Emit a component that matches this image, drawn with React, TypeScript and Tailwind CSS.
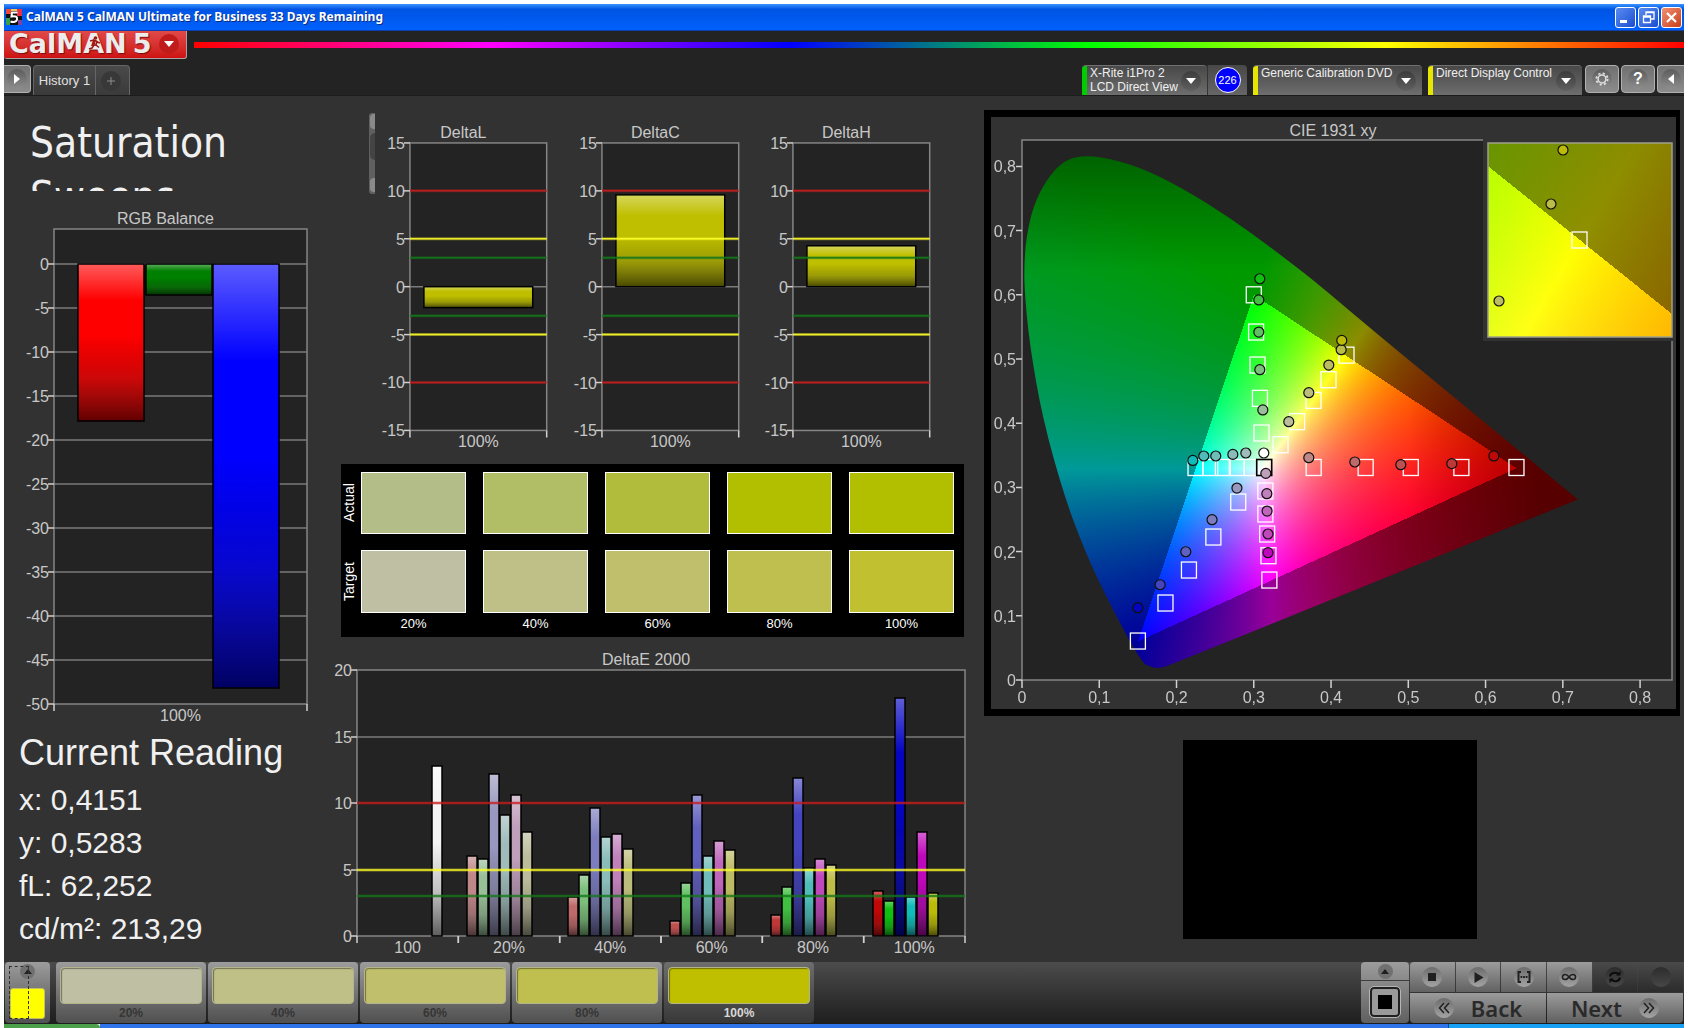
import React, { useLayoutEffect, useRef } from "react";

const CHART_FONT = "font-['Liberation_Sans',Arial,sans-serif]";

type Bar = { x: number; width: number; value: number; color: string };
type Line = { value: number; color: string };

type ChartProps = {
  title: string;
  width: number;
  height: number;
  plot: { left: number; top: number; right: number; bottom: number };
  min: number;
  max: number;
  ticks: number[];
  grid: number[];
  lines?: Line[];
  bars: Bar[];
  xLabels: string[];
};

const Gloss: React.FC = () => (
  <svg width="0" height="0" className="absolute" aria-hidden="true">
    <defs>
      <linearGradient id="gloss" x1="0" y1="0" x2="0" y2="1">
        <stop offset="0" stopColor="#fff" stopOpacity="0.36" />
        <stop offset="0.23" stopColor="#fff" stopOpacity="0" />
        <stop offset="0.45" stopColor="#000" stopOpacity="0" />
        <stop offset="0.72" stopColor="#222" stopOpacity="0.22" />
        <stop offset="1" stopColor="#000" stopOpacity="0.62" />
      </linearGradient>
    </defs>
  </svg>
);

const BarChart: React.FC<ChartProps> = ({
  title,
  width,
  height,
  plot,
  min,
  max,
  ticks,
  grid,
  lines = [],
  bars,
  xLabels,
}) => {
  const { left, top, right, bottom } = plot;
  const y = (v: number) =>
    Math.round(bottom - ((v - min) / (max - min)) * (bottom - top));
  const cell = (right - left) / xLabels.length;
  const zero = y(0);

  return (
    <svg
      viewBox={`0 0 ${width} ${height}`}
      className={`block w-full h-auto text-base ${CHART_FONT}`}
      role="img"
      aria-label={title}
    >
      <text
        x={(left + right) / 2 - 15}
        y={top - 5}
        textAnchor="middle"
        fill="#c8c8c8"
      >
        {title}
      </text>
      <rect
        x={left}
        y={top}
        width={right - left}
        height={bottom - top}
        fill="#232323"
      />
      {grid.map((v) => (
        <path
          key={v}
          d={`M${left} ${y(v)}H${right}`}
          stroke="#7b7b7b"
          strokeWidth="1.5"
        />
      ))}
      <rect
        x={left}
        y={top}
        width={right - left}
        height={bottom - top}
        fill="none"
        stroke="#858585"
        strokeWidth="1.5"
      />
      {bars.map((bar, i) => {
        const end = y(bar.value);
        const box = {
          x: bar.x,
          y: Math.min(zero, end),
          width: bar.width,
          height: Math.abs(end - zero),
        };
        return (
          <g key={i}>
            <rect {...box} fill={bar.color} />
            <rect {...box} fill="url(#gloss)" stroke="#000" strokeWidth="1.5" />
          </g>
        );
      })}
      {lines.map((line) => (
        <g key={line.value} stroke={line.color}>
          <path
            d={`M${left} ${y(line.value)}H${right}`}
            strokeWidth="3"
            opacity="0.4"
          />
          <path
            d={`M${left} ${y(line.value)}H${right}`}
            strokeWidth="1.5"
            opacity="0.85"
          />
        </g>
      ))}
      {ticks.map((v) => (
        <g key={v}>
          <path
            d={`M${left - 6} ${y(v)}H${left}`}
            stroke="#d0d0d0"
            strokeWidth="1.5"
          />
          <text x={left - 5} y={y(v) + 6} textAnchor="end" fill="#c8c8c8">
            {v}
          </text>
        </g>
      ))}
      {xLabels.map((label, i) => (
        <g key={i}>
          <path
            d={`M${left + i * cell} ${bottom}v7M${left + (i + 1) * cell} ${bottom}v7`}
            stroke="#d0d0d0"
            strokeWidth="1.5"
          />
          <text
            x={left + (i + 0.5) * cell}
            y={bottom + 17}
            textAnchor="middle"
            fill="#c8c8c8"
          >
            {label}
          </text>
        </g>
      ))}
    </svg>
  );
};

const limits: Line[] = [
  { value: 10, color: "#c81e1e" },
  { value: 5, color: "#ffff28" },
  { value: 3, color: "#14781a" },
  { value: -3, color: "#14781a" },
  { value: -5, color: "#ffff28" },
  { value: -10, color: "#c81e1e" },
];

const DeltaChart: React.FC<{ title: string; value: number }> = ({
  title,
  value,
}) => (
  <BarChart
    title={title}
    width={192}
    height={344}
    plot={{ left: 35, top: 30, right: 172, bottom: 318 }}
    min={-15}
    max={15}
    ticks={[15, 10, 5, 0, -5, -10, -15]}
    grid={[0]}
    lines={limits}
    bars={[{ x: 49, width: 109, value, color: "#bfbf00" }]}
    xLabels={["100%"]}
  />
);

const deltaE = [
  {
    values: [6, 5.8, 12.2, 9.1, 10.6, 7.8],
    colors: ["#bf8888", "#98bf98", "#9898bf", "#a0bcba", "#bf9fba", "#bcbc9c"],
  },
  {
    values: [2.9, 4.6, 9.65, 7.45, 7.65, 6.55],
    colors: ["#bf6a6a", "#7dbf7d", "#7c7cbf", "#8abcba", "#bf80bb", "#bcbc7c"],
  },
  {
    values: [1.15, 4, 10.6, 6.05, 7.15, 6.45],
    colors: ["#bf5050", "#60bf60", "#6060bf", "#70bcba", "#bf66bb", "#bcbc64"],
  },
  {
    values: [1.6, 3.65, 11.85, 5.1, 5.8, 5.35],
    colors: ["#bf3838", "#40bf40", "#4444bf", "#50bcba", "#bf48bb", "#bcbc48"],
  },
  {
    values: [3.4, 2.65, 17.9, 2.9, 7.8, 3.2],
    colors: ["#bf0808", "#10bf10", "#0505bf", "#10bcba", "#bf08bb", "#bcbc08"],
  },
];

const deltaEBars: Bar[] = [
  { x: 102, width: 10, value: 12.8, color: "#f4f4f4" },
  ...deltaE.flatMap(({ values, colors }, group) =>
    values.map((value, i) => ({
      x: Math.round(137 + group * 101.4) + i * 11,
      width: 10,
      value,
      color: colors[i],
    })),
  ),
];

/* CIE 1931 chromaticity diagram */

const PLOT_W = 650;
const PLOT_H = 540;
const UNIT_X = 772.6;
const UNIT_Y = 642;

const locus: [number, number][] = [
  [0.164, 0.0195],
  [0.1555, 0.029],
  [0.1409, 0.0576],
  [0.1087, 0.1302],
  [0.0824, 0.1978],
  [0.0561, 0.2809],
  [0.0269, 0.4054],
  [0.0095, 0.5247],
  [0.003, 0.61],
  [0.003, 0.65],
  [0.0055, 0.689],
  [0.0145, 0.7385],
  [0.032, 0.78],
  [0.0503, 0.8045],
  [0.07, 0.816],
  [0.0999, 0.8155],
  [0.1496, 0.8009],
  [0.208, 0.766],
  [0.2694, 0.7197],
  [0.325, 0.671],
  [0.3775, 0.6229],
  [0.4477, 0.551],
  [0.5955, 0.4045],
  [0.7194, 0.2813],
  [0.189, 0.022],
  [0.178, 0.0185],
];

const locusPath =
  locus
    .map((p, i) => {
      const q = locus[(i + 1) % locus.length];
      const mx = ((p[0] + q[0]) / 2) * UNIT_X;
      const my = PLOT_H - ((p[1] + q[1]) / 2) * UNIT_Y;
      if (i === 0) return `M${mx} ${my}`;
      const px = p[0] * UNIT_X;
      const py = PLOT_H - p[1] * UNIT_Y;
      // keep the red corner sharp, smooth everything else
      return p[0] > 0.7 ? `L${px} ${py}L${mx} ${my}` : `Q${px} ${py} ${mx} ${my}`;
    })
    .join("") + "Z";

const chromaColor = (x: number, y: number): [number, number, number] => {
  const X = x / y;
  const Z = (1 - x - y) / y;
  const r = 3.2406 * X - 1.5372 - 0.4986 * Z;
  const g = -0.9689 * X + 1.8758 + 0.0415 * Z;
  const b = 0.0557 * X - 0.204 + 1.057 * Z;
  const inside = r >= 0 && g >= 0 && b >= 0;
  const level = inside
    ? 1 - 2 * Math.max(0, x - 0.5)
    : Math.max(
        0.34,
        0.6 - 1.2 * Math.max(0, y - 0.64) - 0.9 * Math.max(0, x - 0.38),
      );
  const k = (255 * level) / Math.max(r, g, b);
  return [Math.max(0, r) * k, Math.max(0, g) * k, Math.max(0, b) * k];
};

type GamutProps = {
  width: number;
  height: number;
  x0: number;
  x1: number;
  y0: number;
  y1: number;
  outline?: string;
};

const GamutCanvas: React.FC<GamutProps> = ({
  width,
  height,
  x0,
  x1,
  y0,
  y1,
  outline,
}) => {
  const ref = useRef<HTMLCanvasElement>(null);

  useLayoutEffect(() => {
    const ctx = ref.current?.getContext("2d");
    if (!ctx) return;
    const image = ctx.createImageData(width, height);
    for (let j = 0; j < height; j++) {
      const y = y1 - ((j + 0.5) / height) * (y1 - y0);
      for (let i = 0; i < width; i++) {
        const x = x0 + ((i + 0.5) / width) * (x1 - x0);
        const [r, g, b] = chromaColor(x, Math.max(y, 0.001));
        image.data.set([r, g, b, 255], (j * width + i) * 4);
      }
    }
    ctx.putImageData(image, 0, 0);
    if (outline) {
      ctx.globalCompositeOperation = "destination-in";
      ctx.fill(new Path2D(outline));
    }
  }, [width, height, x0, x1, y0, y1, outline]);

  return (
    <canvas
      ref={ref}
      width={width}
      height={height}
      className="block w-full h-full"
    />
  );
};

const targets: [number, number][] = [
  [0.3775, 0.331], [0.4448, 0.331], [0.5032, 0.331], [0.5687, 0.331], [0.64, 0.331],
  [0.31, 0.3847], [0.308, 0.4387], [0.3048, 0.4906], [0.303, 0.542], [0.3, 0.6],
  [0.2799, 0.2772], [0.2477, 0.2227], [0.2161, 0.1713], [0.1857, 0.1199], [0.15, 0.0607],
  [0.2975, 0.331], [0.278, 0.331], [0.26, 0.331], [0.2436, 0.331], [0.2246, 0.331],
  [0.315, 0.2944], [0.315, 0.2586], [0.3173, 0.2274], [0.319, 0.1936], [0.3202, 0.1557],
  [0.3346, 0.3665], [0.356, 0.4024], [0.3773, 0.4355], [0.3967, 0.4677], [0.42, 0.506],
];

const readings: [number, number, string][] = [
  [0.3712, 0.3463, "#bf8888"], [0.4308, 0.3396, "#bf6a6a"], [0.4903, 0.3354, "#bf5050"],
  [0.5563, 0.337, "#bf3838"], [0.6107, 0.349, "#bf0808"],
  [0.3117, 0.4206, "#98bf98"], [0.3078, 0.4833, "#7dbf7d"], [0.3065, 0.542, "#60bf60"],
  [0.3065, 0.592, "#40bf40"], [0.3078, 0.625, "#10bf10"],
  [0.2782, 0.299, "#9898bf"], [0.246, 0.2497, "#7c7cbf"], [0.212, 0.1998, "#6060bf"],
  [0.1788, 0.1484, "#4444bf"], [0.15, 0.1126, "#0505bf"],
  [0.2897, 0.3536, "#a0bcba"], [0.2729, 0.3514, "#8abcba"], [0.2508, 0.3489, "#70bcba"],
  [0.2353, 0.3489, "#50bcba"], [0.2211, 0.342, "#10bcba"],
  [0.3156, 0.3219, "#bf9fba"], [0.3169, 0.2902, "#bf80bb"], [0.3172, 0.2632, "#bf66bb"],
  [0.3184, 0.2274, "#bf48bb"], [0.3184, 0.1983, "#bf08bb"],
  [0.3453, 0.4023, "#bcbc9c"], [0.3712, 0.4475, "#bcbc7c"], [0.3971, 0.4906, "#bcbc64"],
  [0.4131, 0.5145, "#bcbc48"], [0.4139, 0.529, "#bcbc08"],
  [0.313, 0.3536, "#ffffff"],
];

const decimal = (n: number) => (n === 0 ? "0" : `0,${n}`);

const CieChart: React.FC = () => {
  const left = 31;
  const bottom = 563;
  const px = (x: number) => left + x * UNIT_X;
  const py = (y: number) => bottom - y * UNIT_Y;

  return (
    <svg
      viewBox="0 0 685 592"
      className={`block w-full h-auto text-base ${CHART_FONT}`}
      role="img"
      aria-label="CIE 1931 xy"
    >
      <text x="342" y="19" textAnchor="middle" fill="#c8c8c8">
        CIE 1931 xy
      </text>
      <rect
        x={left}
        y={bottom - PLOT_H}
        width={PLOT_W}
        height={PLOT_H}
        fill="#232323"
        stroke="#858585"
        strokeWidth="1.5"
      />
      <foreignObject
        x={left}
        y={bottom - PLOT_H}
        width={PLOT_W}
        height={PLOT_H}
      >
        <GamutCanvas
          width={PLOT_W}
          height={PLOT_H}
          x0={0}
          x1={PLOT_W / UNIT_X}
          y0={0}
          y1={PLOT_H / UNIT_Y}
          outline={locusPath}
        />
      </foreignObject>
      {[0, 1, 2, 3, 4, 5, 6, 7, 8].map((n) => (
        <g key={n} fill="#c8c8c8">
          <path
            d={`M${left - 6} ${py(n / 10)}H${left}M${px(n / 10)} ${bottom}v8`}
            stroke="#d0d0d0"
            strokeWidth="1.5"
          />
          <text x={left - 6} y={py(n / 10) + 6} textAnchor="end">
            {decimal(n)}
          </text>
          <text x={px(n / 10)} y={bottom + 23} textAnchor="middle">
            {decimal(n)}
          </text>
        </g>
      ))}
      {targets.map(([x, y], i) => (
        <rect
          key={i}
          x={px(x) - 7.5}
          y={py(y) - 8}
          width="15"
          height="16"
          fill="none"
          stroke="#fff"
          strokeWidth="1.3"
        />
      ))}
      <rect
        x={px(0.3135) - 7.5}
        y={py(0.331) - 8}
        width="15"
        height="16"
        fill="none"
        stroke="#000"
        strokeWidth="1.6"
      />
      {readings.map(([x, y, color], i) => (
        <circle
          key={i}
          cx={px(x)}
          cy={py(y)}
          r="5"
          fill={color}
          stroke="#101010"
          strokeWidth="1.2"
        />
      ))}

      <rect x="492" y="20" width="193" height="204" fill="#323232" />
      <foreignObject x="497" y="26" width="184" height="194">
        <GamutCanvas
          width={184}
          height={194}
          x0={0.3953}
          x1={0.4433}
          y0={0.4803}
          y1={0.5303}
        />
      </foreignObject>
      <rect
        x="497"
        y="26"
        width="184"
        height="194"
        fill="none"
        stroke="#a0a08c"
        strokeWidth="1.5"
      />
      <rect
        x="581"
        y="115"
        width="15"
        height="16"
        fill="none"
        stroke="#fff"
        strokeWidth="1.3"
      />
      <g stroke="#101010" strokeWidth="1.2">
        <circle cx="572" cy="33" r="5" fill="#bcbc08" />
        <circle cx="560" cy="87" r="5" fill="#bcbc48" />
        <circle cx="508" cy="184" r="5" fill="#bcbc64" />
      </g>
    </svg>
  );
};

/* Window chrome */

const TitleBar: React.FC = () => (
  <div className="flex h-[27px] items-center gap-1 bg-linear-to-b from-[#3a93ff] via-[#0054e3] via-20% to-[#0061fc] border-b border-[#0b3fae] pl-[2px] pr-[2px]">
    <svg viewBox="0 0 16 16" className="size-4" aria-hidden="true">
      <rect width="16" height="16" fill="#101010" />
      <path d="M0 0h5v5H0z" fill="#f04838" />
      <path d="M11 0h5v7h-5z" fill="#e83040" />
      <path d="M0 9h4v7H0z" fill="#38a048" />
      <path d="M12 11h4v5h-4z" fill="#8040a0" />
      <path d="M5 0h6v2H5z" fill="#e8c860" />
      <path
        d="M11.500 3.500H6L5.500 7.500C10 6.500 11.500 8 11 10.500 10.500 13 7.500 13.500 4.500 12.500"
        fill="none"
        stroke="#fff"
        strokeWidth="2"
      />
    </svg>
    <h1 className="flex-1 truncate font-['Noto_Sans','Open_Sans',sans-serif] text-xs font-bold text-white [text-shadow:1px_1px_0_#0a2a80]">
      CalMAN 5 CalMAN Ultimate for Business 33 Days Remaining
    </h1>
    <div className="flex gap-[2px]">
      <button
        aria-label="Minimize"
        className="size-[21px] rounded-[3px] border border-white bg-linear-to-br from-[#5a8cf0] to-[#1c4cd0]"
      >
        <svg viewBox="0 0 19 19" className="size-full">
          <path d="M4 12h7v3H4z" fill="#fff" />
        </svg>
      </button>
      <button
        aria-label="Restore"
        className="size-[21px] rounded-[3px] border border-white bg-linear-to-br from-[#5a8cf0] to-[#1c4cd0]"
      >
        <svg viewBox="0 0 19 19" className="size-full">
          <path
            d="M7 7V4h8v7h-3M7 4.500h8M4.500 8h7v6.500h-7zM4 9h8"
            fill="none"
            stroke="#fff"
            strokeWidth="1.3"
          />
        </svg>
      </button>
      <button
        aria-label="Close"
        className="size-[21px] rounded-[3px] border border-white bg-linear-to-br from-[#f09070] to-[#c83a14]"
      >
        <svg viewBox="0 0 19 19" className="size-full">
          <path d="M5 5l9 9M14 5l-9 9" stroke="#fff" strokeWidth="2.2" />
        </svg>
      </button>
    </div>
  </div>
);

const DownArrow: React.FC<{ className: string }> = ({ className }) => (
  <span
    className={`flex size-5 shrink-0 items-center justify-center rounded-full ${className}`}
  >
    <svg viewBox="0 0 10 6" className="w-[10px]" aria-hidden="true">
      <path d="M0 0h10L5 6z" fill="#fff" />
    </svg>
  </span>
);

const SourceButton: React.FC<{
  lines: string[];
  width: string;
  stripe: string;
}> = ({ lines, width, stripe }) => (
  <button
    className={`flex h-[30px] ${width} overflow-hidden rounded-t-[4px] border-t border-[#707070] bg-linear-to-b from-[#484848] to-[#6e6e6e] text-left`}
  >
    <span className={`h-full w-[5px] shrink-0 ${stripe}`} />
    <span className="flex-1 pl-[3px] text-xs leading-[14px] whitespace-nowrap text-[#f0f0f0]">
      {lines.map((line) => (
        <span key={line} className="block">
          {line}
        </span>
      ))}
    </span>
    <DownArrow className="mt-[5px] mr-[6px] bg-linear-to-b from-[#3c3c3c] to-[#606060]" />
  </button>
);

const roundIcon =
  "flex size-5 items-center justify-center rounded-full bg-linear-to-b from-[#5c5c5c] to-[#8e8e8e]";
const squareButton =
  "flex h-7 items-center justify-center border border-[#b0b0b0] bg-linear-to-b from-[#707070] to-[#8c8c8c]";

const Header: React.FC = () => (
  <header className="bg-[#232323]">
    <div className="flex h-[34px] items-start">
      <button className="flex h-[28px] w-[183px] items-start overflow-hidden rounded-b-[3px] border-r border-b border-[#a8a0a0] bg-linear-to-b from-[#e04848] to-[#cc1010] pl-[5px]">
        <span className="relative flex gap-[6px] font-['DejaVu_Sans',sans-serif] text-[27px] leading-[26px] font-bold text-[#ececec] [text-shadow:1px_1px_1px_#7c0c0c]">
          <span>CalMAN</span>
          <span>5</span>
          <svg
            viewBox="0 0 14 16"
            className="absolute top-[5px] left-[79px] h-4 w-[14px]"
            aria-hidden="true"
          >
            <circle cx="7.500" cy="2" r="1.800" fill="#9c1818" />
            <path
              d="M2 5l4-1 3 1.500L8 9l3 2.500M6.500 5L6 9l-2 3-3 1M9 6l3 1"
              fill="none"
              stroke="#9c1818"
              strokeWidth="1.600"
            />
          </svg>
        </span>
        <DownArrow className="mt-[3px] ml-2 bg-[#c01c1c]" />
      </button>
      <div className="mt-[11px] ml-[7px] h-[6px] flex-1 bg-[linear-gradient(90deg,#f00_0%,#f0f_20%,#00f_40%,#0f0_60%,#ff0_80%,#f00_100%)]" />
    </div>
    <div className="flex h-[31px] items-start justify-between border-b border-[#1c1c1c]">
      <div className="flex">
        <button
          aria-label="Expand"
          className={`${squareButton} w-[27px] rounded-r-[4px] border-l-0`}
        >
          <span className={roundIcon}>
            <svg viewBox="0 0 6 10" className="h-[10px]">
              <path d="M0 0l6 5-6 5z" fill="#fff" />
            </svg>
          </span>
        </button>
        <div className="ml-[2px] flex h-[30px] rounded-t-[4px] border border-b-0 border-[#666] bg-linear-to-b from-[#4a4a4a] to-[#3a3a3a]">
          <button className="w-[62px] border-r border-[#666] text-[13px] whitespace-nowrap text-[#e0e0e0]">
            History 1
          </button>
          <button
            aria-label="Add history"
            className="flex w-[33px] items-center justify-center pr-1"
          >
            <span className="flex size-5 items-center justify-center rounded-full bg-[#383838]">
              <svg viewBox="0 0 8 8" className="size-2">
                <path d="M4 0v8M0 4h8" stroke="#8c8c8c" />
              </svg>
            </span>
          </button>
        </div>
      </div>
      <div className="flex">
        <SourceButton
          lines={["X-Rite i1Pro 2", "LCD Direct View"]}
          width="w-[125px]"
          stripe="bg-[#0c0]"
        />
        <div className="mr-[6px] flex h-[30px] w-[40px] items-center justify-center rounded-tr-[4px] border-l border-[#333] bg-linear-to-b from-[#484848] to-[#666]">
          <span className="flex size-[26px] items-center justify-center rounded-full border border-white bg-[#00f] text-[11px] text-white">
            226
          </span>
        </div>
        <SourceButton
          lines={["Generic Calibration DVD"]}
          width="w-[169px]"
          stripe="bg-[#e6e600]"
        />
        <div className="w-[6px]" />
        <SourceButton
          lines={["Direct Display Control"]}
          width="w-[154px]"
          stripe="bg-[#e6e600]"
        />
        <button
          aria-label="Settings"
          className={`${squareButton} ml-[3px] w-[34px] rounded-[4px]`}
        >
          <span className={roundIcon}>
            <svg viewBox="0 0 16 16" className="size-[14px]" fill="none">
              <circle cx="8" cy="8" r="4.500" stroke="#e0e0e0" strokeWidth="1.800" />
              <circle
                cx="8"
                cy="8"
                r="6.500"
                stroke="#e0e0e0"
                strokeWidth="2"
                strokeDasharray="2.550 2.550"
              />
            </svg>
          </span>
        </button>
        <button
          aria-label="Help"
          className={`${squareButton} ml-[2px] w-[34px] rounded-[4px] text-base font-bold text-white`}
        >
          <span className={roundIcon}>?</span>
        </button>
        <button
          aria-label="Collapse"
          className={`${squareButton} ml-[2px] w-[27px] rounded-l-[4px] border-r-0`}
        >
          <span className={roundIcon}>
            <svg viewBox="0 0 6 10" className="h-[10px]">
              <path d="M6 0L0 5l6 5z" fill="#fff" />
            </svg>
          </span>
        </button>
      </div>
    </div>
  </header>
);

/* Content */

const ReadingPanel: React.FC = () => (
  <section className="flex flex-col">
    <div className="mt-5 h-[75px] overflow-hidden pl-[26px] font-['DejaVu_Sans_Condensed','DejaVu_Sans',sans-serif] text-[42px] leading-[54px] text-[#f0f0f0]">
      Saturation
      <br />
      Sweeps
    </div>
    <BarChart
      title="RGB Balance"
      width={326}
      height={536}
      plot={{ left: 50, top: 38, right: 303, bottom: 513 }}
      min={-50}
      max={4}
      ticks={[0, -5, -10, -15, -20, -25, -30, -35, -40, -45, -50]}
      grid={[0, -5, -10, -15, -20, -25, -30, -35, -40, -45]}
      bars={[
        { x: 74, width: 66, value: -17.8, color: "#ff0000" },
        { x: 142, width: 66, value: -3.5, color: "#008000" },
        { x: 209, width: 66, value: -48.2, color: "#0000ff" },
      ]}
      xLabels={["100%"]}
    />
    <div className="pl-[15px] text-[30px] leading-[43px] text-[#f0f0f0]">
      <h2 className="mt-1 mb-1 text-[36px]">Current Reading</h2>
      <p>x: 0,4151</p>
      <p>y: 0,5283</p>
      <p>fL: 62,252</p>
      <p>cd/m²: 213,29</p>
    </div>
  </section>
);

const swatches = [
  { label: "20%", actual: "#b2bd88", target: "#bfbfa4" },
  { label: "40%", actual: "#b2be66", target: "#bfbf88" },
  { label: "60%", actual: "#b2bc3c", target: "#bfbf6c" },
  { label: "80%", actual: "#b2be00", target: "#bfbf50" },
  { label: "100%", actual: "#b2be00", target: "#c0c030" },
];

const SwatchPanel: React.FC = () => (
  <div className="mt-2 mr-[6px] ml-[11px] flex bg-black pt-2 pr-[10px] text-white">
    <div className="flex w-5 flex-col gap-4 pr-1 text-sm">
      <div className="flex h-[62px] w-4 items-center justify-center [writing-mode:vertical-rl] rotate-180">
        Actual
      </div>
      <div className="flex h-[63px] w-4 items-center justify-center [writing-mode:vertical-rl] rotate-180">
        Target
      </div>
    </div>
    <div className="grid flex-1 grid-cols-5 gap-x-[17px] text-[13px]">
      {swatches.map((s) => (
        <div key={s.label}>
          <div
            className="h-[62px] border border-white"
            style={{ backgroundColor: s.actual }}
          />
          <div
            className="mt-4 h-[63px] border border-white"
            style={{ backgroundColor: s.target }}
          />
          <div className="h-6 text-center leading-[22px]">{s.label}</div>
        </div>
      ))}
    </div>
  </div>
);

const MiddlePanel: React.FC = () => (
  <section className="flex flex-col">
    <div className="mt-[17px] flex items-start pr-5 pl-[39px]">
      <div className="h-[81px] w-[6px] rounded-l-[3px] bg-[#606060] py-px pl-px">
        <div className="h-[15px] rounded-l-[4px] bg-[#8a8a8a]" />
        <div className="mt-1 h-[27px] rounded-l-[6px] bg-[#444]" />
        <div className="mt-[18px] h-[14px] rounded-l-[4px] bg-[#8a8a8a]" />
      </div>
      <div className="grid flex-1 grid-cols-3">
        <DeltaChart title="DeltaL" value={-2.2} />
        <DeltaChart title="DeltaC" value={9.6} />
        <DeltaChart title="DeltaH" value={4.3} />
      </div>
    </div>
    <SwatchPanel />
    <div className="mt-2">
      <BarChart
        title="DeltaE 2000"
        width={640}
        height={310}
        plot={{ left: 27, top: 25, right: 635, bottom: 291 }}
        min={0}
        max={20}
        ticks={[20, 15, 10, 5, 0]}
        grid={[15]}
        lines={limits.filter((line) => line.value > 0)}
        bars={deltaEBars}
        xLabels={["100", "20%", "40%", "60%", "80%", "100%"]}
      />
    </div>
  </section>
);

/* Bottom bar */

const patches = [
  { label: "20%", color: "#bfbfa4" },
  { label: "40%", color: "#bfbf88" },
  { label: "60%", color: "#bfbf6c" },
  { label: "80%", color: "#bfbf50" },
  { label: "100%", color: "#bfbf00" },
];

const IconButton: React.FC<{
  label: string;
  dim?: boolean;
  children?: React.ReactNode;
}> = ({ label, dim, children }) => (
  <button
    aria-label={label}
    className={`flex h-[30px] items-center justify-center bg-linear-to-b ${
      dim ? "from-[#4a4a4a] to-[#2c2c2c]" : "from-[#9c9c9c] to-[#626262]"
    }`}
  >
    <span
      className={`flex size-5 items-center justify-center rounded-full bg-linear-to-b ${
        dim ? "from-[#2c2c2c] to-[#484848]" : "from-[#6c6c6c] to-[#a4a4a4]"
      }`}
    >
      <svg
        viewBox="0 0 16 16"
        className="size-4"
        fill="none"
        stroke="#202020"
        strokeWidth="1.600"
      >
        {children}
      </svg>
    </span>
  </button>
);

const BottomBar: React.FC = () => (
  <footer className="flex h-[62px] items-start justify-between bg-linear-to-b from-[#4c4c4c] to-[#1e1e1e]">
    <div className="flex gap-[2px]">
      <button
        aria-label="Patch menu"
        className="relative mr-1 ml-px flex h-[61px] w-[45px] flex-col items-center justify-between rounded-[4px] bg-linear-to-b from-[#9c9c9c] to-[#505050] px-[5px] pt-[2px] pb-1"
      >
        <span className="flex size-[15px] items-center justify-center rounded-full bg-[#707070]">
          <svg viewBox="0 0 8 5" className="w-2">
            <path d="M0 5l4-5 4 5z" fill="#202020" />
          </svg>
        </span>
        <span className="h-[31px] w-full rounded-[3px] border border-[#c0c060] bg-[#ff0]" />
        <span className="absolute top-1 left-1 h-[53px] w-5 border border-dashed border-[#303030]" />
      </button>
      {patches.map((p) => {
        const active = p.label === "100%";
        return (
          <button
            key={p.label}
            className={`flex h-[61px] w-[150px] flex-col rounded-[4px] bg-linear-to-b px-1 pt-[5px] text-xs font-bold ${
              active
                ? "from-[#6e6e6e] to-[#383838] text-[#d8d8d8]"
                : "from-[#9c9c9c] to-[#505050] text-[#363636]"
            }`}
          >
            <span
              className="block h-[37px] w-full rounded-[4px] border border-[#b4b48c] shadow-[inset_1px_1px_1px_rgba(0,0,0,0.4)]"
              style={{ backgroundColor: p.color }}
            />
            <span className="block w-full text-center leading-[19px]">
              {p.label}
            </span>
          </button>
        );
      })}
    </div>
    <div className="flex gap-px pr-px">
      <div className="flex w-12 flex-col gap-px">
        <button
          aria-label="Show pattern options"
          className="flex h-[18px] items-center justify-center rounded-t-[4px] bg-linear-to-b from-[#9c9c9c] to-[#8a8a8a]"
        >
          <span className="flex size-[15px] items-center justify-center rounded-full bg-[#707070]">
            <svg viewBox="0 0 8 5" className="w-2">
              <path d="M0 5l4-5 4 5z" fill="#202020" />
            </svg>
          </span>
        </button>
        <button
          aria-label="Pattern window"
          className="flex h-[42px] items-center justify-center rounded-b-[4px] bg-linear-to-b from-[#8a8a8a] to-[#606060]"
        >
          <span className="flex size-[30px] items-center justify-center rounded-[4px] border-2 border-[#202020] bg-[#9a9a9a] outline outline-[#b4b4b4]">
            <span className="size-[14px] bg-black" />
          </span>
        </button>
      </div>
      <div className="grid w-[273px] grid-cols-6 gap-px overflow-hidden rounded-[4px]">
        <IconButton label="Stop">
          <path d="M4 4h8v8H4z" fill="#202020" stroke="none" />
        </IconButton>
        <IconButton label="Play">
          <path d="M4.500 3l9 5.500-9 5.500z" fill="#202020" stroke="none" />
        </IconButton>
        <IconButton label="Read series">
          <path d="M5 3H2.500v10H5M11 3h2.500v10H11" strokeWidth="2" />
          <path d="M4.500 8h7" strokeWidth="2" strokeDasharray="1.800 0.800" />
        </IconButton>
        <IconButton label="Read continuously">
          <path d="M8 8C6 5 1.500 4.500 1.500 8S6 11 8 8s6.500-3.500 6.500 0S10 11 8 8z" />
        </IconButton>
        <IconButton label="Refresh" dim>
          <g stroke="#0c0c0c" strokeWidth="2">
            <path d="M3 7.500C3.500 4 8 2.500 11.500 5M13 8.500C12.500 12 8 13.500 4.500 11" />
            <path d="M13.500 2v4.500H9zM2.500 14V9.500H7z" fill="#0c0c0c" stroke="none" />
          </g>
        </IconButton>
        <IconButton label="Record" dim />
        <button className="col-span-3 flex h-[30px] items-center justify-center gap-[17px] bg-linear-to-b from-[#9c9c9c] to-[#606060] font-['Noto_Sans','Open_Sans',sans-serif] text-[22px] leading-[30px] font-semibold text-[#2a2a2a]">
          <span className="flex size-5 items-center justify-center rounded-full bg-linear-to-b from-[#6c6c6c] to-[#a4a4a4]">
            <svg viewBox="0 0 12 12" className="size-3" fill="none" stroke="#202020" strokeWidth="1.500">
              <path d="M6 1L1.500 6 6 11M11 1L6.500 6l4.500 5" />
            </svg>
          </span>
          Back
        </button>
        <button className="col-span-3 flex h-[30px] items-center justify-center gap-[17px] bg-linear-to-b from-[#9c9c9c] to-[#606060] font-['Noto_Sans','Open_Sans',sans-serif] text-[22px] leading-[30px] font-semibold text-[#2a2a2a]">
          Next
          <span className="flex size-5 items-center justify-center rounded-full bg-linear-to-b from-[#6c6c6c] to-[#a4a4a4]">
            <svg viewBox="0 0 12 12" className="size-3" fill="none" stroke="#202020" strokeWidth="1.500">
              <path d="M1 1l4.500 5L1 11M6 1l4.500 5L6 11" />
            </svg>
          </span>
        </button>
      </div>
    </div>
  </footer>
);

const App: React.FC = () => (
  <div className="bg-white px-1 pt-1 font-['Liberation_Sans',Arial,sans-serif]">
    <Gloss />
    <TitleBar />
    <Header />
    <main className="grid grid-cols-[326fr_640fr_714fr] bg-[#323232] pb-[7px]">
      <ReadingPanel />
      <MiddlePanel />
      <section className="flex flex-col items-center pr-1 pl-[14px]">
        <div className="mt-[14px] w-full border-[7px] border-r-4 border-black bg-[#323232]">
          <CieChart />
        </div>
        <div className="mt-6 mr-1 h-[199px] w-[294px] bg-black" />
      </section>
    </main>
    <BottomBar />
    <div className="flex h-1">
      <div className="w-24 rounded-tr-[4px] bg-[#4ca04c]" />
      <div className="flex-1 bg-[#2f74e8]" />
      <div className="w-[236px] border-l border-[#0a4a90] bg-[#18a0f4]" />
    </div>
  </div>
);

export default App;
